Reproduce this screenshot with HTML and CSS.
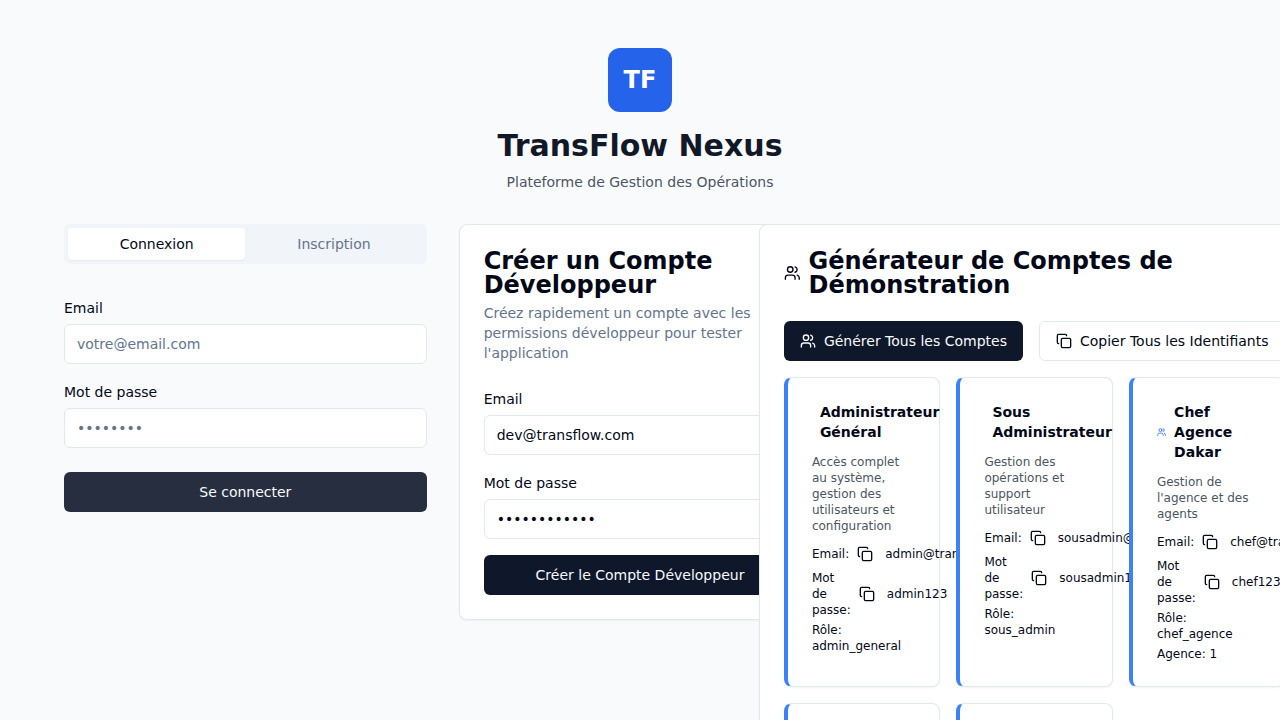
FILE: index.html
```html
<!DOCTYPE html>
<html lang="fr">
<head>
<meta charset="utf-8">
<meta name="viewport" content="width=device-width, initial-scale=1">
<title>TransFlow Nexus</title>
<link rel="stylesheet" href="styles.css">
</head>
<body>
<svg class="sprite" aria-hidden="true">
  <symbol id="users" viewBox="0 0 24 24"><path d="M16 21v-2a4 4 0 0 0-4-4H6a4 4 0 0 0-4 4v2"/><circle cx="9" cy="7" r="4"/><path d="M22 21v-2a4 4 0 0 0-3-3.87"/><path d="M16 3.13a4 4 0 0 1 0 7.75"/></symbol>
  <symbol id="copy" viewBox="0 0 24 24"><rect width="14" height="14" x="8" y="8" rx="2" ry="2"/><path d="M4 16c-1.1 0-2-.9-2-2V4c0-1.1.9-2 2-2h10c1.1 0 2 .9 2 2"/></symbol>
</svg>
<div class="page">
  <header class="brand">
    <div class="brand-logo">TF</div>
    <h1 class="brand-name">TransFlow Nexus</h1>
    <p class="brand-tagline">Plateforme de Gestion des Opérations</p>
  </header>

  <main class="columns">
    <section class="login">
      <div class="tabs" role="tablist">
        <button class="tab tab-active" type="button" role="tab" aria-selected="true">Connexion</button>
        <button class="tab" type="button" role="tab" aria-selected="false">Inscription</button>
      </div>
      <form class="login-form">
        <div class="fields">
          <div class="field">
            <label class="label" for="login-email">Email</label>
            <input class="input" id="login-email" type="email" placeholder="votre@email.com">
          </div>
          <div class="field">
            <label class="label" for="login-password">Mot de passe</label>
            <input class="input" id="login-password" type="password" placeholder="••••••••">
          </div>
        </div>
        <button class="button button-soft" type="button">Se connecter</button>
      </form>
    </section>

    <section class="card developer">
      <div class="card-header">
        <h2 class="card-title">Créer un Compte Développeur</h2>
        <p class="card-description">Créez rapidement un compte avec les permissions développeur pour tester l'application</p>
      </div>
      <form class="fields">
        <div class="field">
          <label class="label" for="dev-email">Email</label>
          <input class="input" id="dev-email" type="email" value="dev@transflow.com">
        </div>
        <div class="field">
          <label class="label" for="dev-password">Mot de passe</label>
          <input class="input" id="dev-password" type="password" value="developer123">
        </div>
        <button class="button" type="button">Créer le Compte Développeur</button>
      </form>
    </section>

    <div class="generator-column">
      <section class="card generator">
        <h2 class="card-title title-row">
          <svg class="icon icon-large"><use href="#users"/></svg>
          <span>Générateur de Comptes de Démonstration</span>
        </h2>
        <div class="actions">
          <button class="button" type="button"><svg class="icon"><use href="#users"/></svg>Générer Tous les Comptes</button>
          <button class="button button-outline" type="button"><svg class="icon"><use href="#copy"/></svg>Copier Tous les Identifiants</button>
        </div>
        <div class="accounts">
          <article class="card account">
            <h3 class="account-title title-row"><svg class="icon icon-blue"><use href="#users"/></svg><span>Administrateur Général</span></h3>
            <p class="account-description">Accès complet au système, gestion des utilisateurs et configuration</p>
            <div class="details">
              <div class="detail"><span>Email:</span><button class="copy" type="button" aria-label="Copier"><svg class="icon"><use href="#copy"/></svg></button><span class="value">admin@transflow.com</span></div>
              <div class="detail"><span>Mot de passe:</span><button class="copy" type="button" aria-label="Copier"><svg class="icon"><use href="#copy"/></svg></button><span class="value">admin123</span></div>
              <p class="line">Rôle: admin_general</p>
            </div>
          </article>
          <article class="card account">
            <h3 class="account-title title-row"><svg class="icon icon-blue"><use href="#users"/></svg><span>Sous Administrateur</span></h3>
            <p class="account-description">Gestion des opérations et support utilisateur</p>
            <div class="details">
              <div class="detail"><span>Email:</span><button class="copy" type="button" aria-label="Copier"><svg class="icon"><use href="#copy"/></svg></button><span class="value">sousadmin@transflow.com</span></div>
              <div class="detail"><span>Mot de passe:</span><button class="copy" type="button" aria-label="Copier"><svg class="icon"><use href="#copy"/></svg></button><span class="value">sousadmin123</span></div>
              <p class="line">Rôle: sous_admin</p>
            </div>
          </article>
          <article class="card account">
            <h3 class="account-title title-row"><svg class="icon icon-blue"><use href="#users"/></svg><span>Chef Agence Dakar</span></h3>
            <p class="account-description">Gestion de l'agence et des agents</p>
            <div class="details">
              <div class="detail"><span>Email:</span><button class="copy" type="button" aria-label="Copier"><svg class="icon"><use href="#copy"/></svg></button><span class="value">chef@transflow.com</span></div>
              <div class="detail"><span>Mot de passe:</span><button class="copy" type="button" aria-label="Copier"><svg class="icon"><use href="#copy"/></svg></button><span class="value">chef123</span></div>
              <p class="line">Rôle: chef_agence</p>
              <p class="line">Agence: 1</p>
            </div>
          </article>
          <article class="card account"></article>
          <article class="card account"></article>
        </div>
      </section>
    </div>
  </main>
</div>
</body>
</html>
```
FILE: styles.css
```css
*, *::before, *::after { box-sizing: border-box; }

html { scrollbar-width: none; }

body {
  margin: 0;
  background: #f9fafc;
  color: #020817;
  font-family: "DejaVu Sans", sans-serif;
  font-size: 14px;
  line-height: 20px;
}

h1, h2, h3, p { margin: 0; }

button, input { font: inherit; color: inherit; }

button { cursor: pointer; }

.sprite { display: none; }

.page {
  min-height: 100vh;
  padding: 48px 64px;
  overflow-x: clip;
}

.brand {
  display: flex;
  flex-direction: column;
  align-items: center;
  margin-bottom: 32px;
  text-align: center;
}

.brand-logo {
  display: flex;
  align-items: center;
  justify-content: center;
  width: 64px;
  height: 64px;
  margin-bottom: 16px;
  border-radius: 12px;
  background: #2563eb;
  color: #fff;
  font-size: 24px;
  font-weight: 700;
  line-height: 32px;
}

.brand-name {
  margin-bottom: 8px;
  color: #111827;
  font-size: 30px;
  font-weight: 700;
  line-height: 36px;
}

.brand-tagline { color: #4b5563; }

.columns {
  display: grid;
  grid-template-columns: repeat(3, minmax(0, 1fr));
  align-items: start;
  gap: 32px;
  max-width: 1152px;
  margin: 0 auto;
}

.tabs {
  display: grid;
  grid-template-columns: 1fr 1fr;
  padding: 4px;
  border-radius: 6px;
  background: #f1f5f9;
}

.tab {
  padding: 6px 12px;
  border: 0;
  border-radius: 4px;
  background: none;
  color: #64748b;
}

.tab-active {
  background: #fff;
  color: #020817;
  box-shadow: 0 1px 2px rgba(0, 0, 0, 0.05);
}

.login-form {
  display: flex;
  flex-direction: column;
  gap: 24px;
  margin-top: 32px;
}

.fields {
  display: flex;
  flex-direction: column;
  gap: 16px;
}

.field {
  display: flex;
  flex-direction: column;
  gap: 4px;
}

.label { line-height: 24px; }

.input {
  width: 100%;
  height: 40px;
  padding: 8px 12px;
  border: 1px solid #e2e8f0;
  border-radius: 6px;
  background: #fff;
}

.input::placeholder { color: #64748b; opacity: 1; }

.button {
  display: flex;
  align-items: center;
  justify-content: center;
  gap: 8px;
  height: 40px;
  padding: 8px 16px;
  border: 0;
  border-radius: 6px;
  background: #0f172a;
  color: #f8fafc;
  white-space: nowrap;
}

.button-soft { background: rgba(15, 23, 42, 0.9); }

.button-outline {
  border: 1px solid #e2e8f0;
  background: #fff;
  color: #020817;
}

.icon {
  width: 16px;
  height: 16px;
  fill: none;
  stroke: currentColor;
  stroke-width: 2;
  stroke-linecap: round;
  stroke-linejoin: round;
}

.icon-large { width: 20px; height: 20px; }

.icon-blue { color: #2563eb; }

.card {
  padding: 24px;
  border: 1px solid #e2e8f0;
  border-radius: 8px;
  background: #fff;
  box-shadow: 0 1px 2px rgba(0, 0, 0, 0.05);
}

.card-header {
  display: flex;
  flex-direction: column;
  gap: 6px;
  margin-bottom: 24px;
}

.card-title {
  font-size: 24px;
  font-weight: 600;
  line-height: 24px;
}

.card-description { color: #64748b; }

.title-row {
  display: flex;
  align-items: center;
  gap: 8px;
}

/* The generator is as wide as its buttons need and stays centred on its column. */
.generator-column {
  display: flex;
  flex-direction: column;
  align-items: center;
}

.generator { width: min-content; }

.actions {
  display: flex;
  gap: 16px;
  margin: 24px 0 16px;
}

.accounts {
  display: grid;
  grid-template-columns: repeat(3, minmax(0, 1fr));
  gap: 16px;
}

.account {
  min-height: 256px;
  border-left: 4px solid #3b82f6;
  font-size: 12px;
  line-height: 16px;
}

.account-title {
  margin-bottom: 12px;
  font-size: 14px;
  font-weight: 600;
  line-height: 20px;
}

.account-description {
  margin-bottom: 8px;
  color: #4b5563;
}

.details {
  display: flex;
  flex-direction: column;
  gap: 4px;
}

.detail {
  display: flex;
  align-items: center;
  gap: 4px;
}

.copy {
  display: flex;
  flex-shrink: 0;
  align-items: center;
  justify-content: center;
  width: 24px;
  height: 24px;
  padding: 0;
  border: 0;
  background: none;
}

.value {
  padding-left: 4px;
  white-space: nowrap;
}
```
